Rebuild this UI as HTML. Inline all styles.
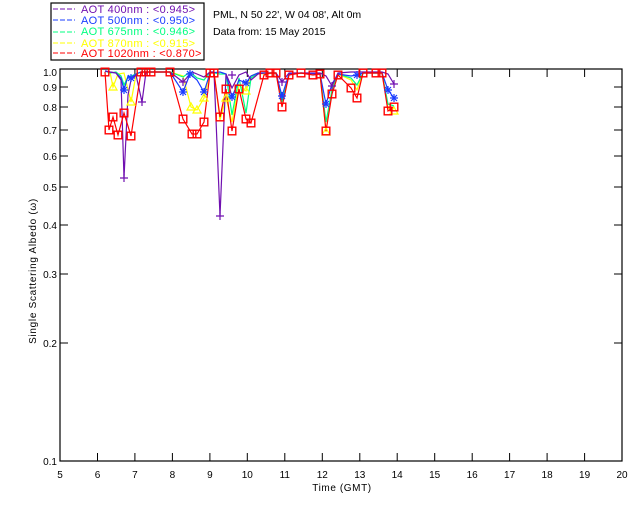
<!DOCTYPE html>
<html><head><meta charset="utf-8"><style>
html,body{margin:0;padding:0;background:#fff;}
svg{display:block;}
svg text{font-family:"Liberation Sans",Arial,sans-serif;}
</style></head><body>
<svg width="640" height="512" viewBox="0 0 640 512" xmlns="http://www.w3.org/2000/svg">
<defs>
<g id="sq"><rect x="-3.8" y="-3.8" width="7.6" height="7.6" fill="none" stroke="#ff0000" stroke-width="1.4"/></g>
<g id="pl"><path d="M-4 0H4M0 -4V4" stroke="#7010b0" stroke-width="1.2"/></g>
<g id="st"><path d="M-4 0H4M0 -4V4M-3 -3L3 3M-3 3L3 -3" stroke="#1a3cff" stroke-width="1.2"/></g>
<g id="tr"><path d="M-4 3L0 -4L4 3Z" fill="none" stroke="#ffff00" stroke-width="1.2"/></g>
</defs>
<rect x="51" y="3" width="153" height="57" fill="#fff" stroke="#000" stroke-width="1.2"/>
<g font-size="11" letter-spacing="0.3">
<line x1="53" y1="9" x2="75" y2="9" stroke="#7010b0" stroke-dasharray="5,2"/>
<text x="81" y="13" fill="#7010b0">AOT  400nm : &lt;0.945&gt;</text>
<line x1="53" y1="20" x2="75" y2="20" stroke="#1a3cff" stroke-dasharray="5,2"/>
<text x="81" y="24" fill="#1a3cff">AOT  500nm : &lt;0.950&gt;</text>
<line x1="53" y1="32" x2="75" y2="32" stroke="#00ff80" stroke-dasharray="5,2"/>
<text x="81" y="35" fill="#00ff80">AOT  675nm : &lt;0.946&gt;</text>
<line x1="53" y1="43" x2="75" y2="43" stroke="#ffff00" stroke-dasharray="5,2"/>
<text x="81" y="47" fill="#ffff00">AOT  870nm : &lt;0.915&gt;</text>
<line x1="53" y1="53" x2="75" y2="53" stroke="#ff0000" stroke-dasharray="5,2"/>
<text x="81" y="57" fill="#ff0000">AOT 1020nm : &lt;0.870&gt;</text>
</g>
<g font-size="10.5">
<text x="213" y="18" fill="#000">PML, N 50 22', W 04 08', Alt 0m</text>
<text x="213" y="35" fill="#000">Data from: 15 May 2015</text>
</g>
<rect x="60" y="69" width="562" height="392" fill="none" stroke="#000" stroke-width="1.2"/>
<g stroke="#000" stroke-width="1">
<path d="M97.5 461v-8M134.9 461v-8M172.4 461v-8M209.9 461v-8M247.3 461v-8M284.8 461v-8M322.3 461v-8M359.8 461v-8M397.2 461v-8M434.7 461v-8M472.2 461v-8M509.6 461v-8M547.1 461v-8M584.6 461v-8"/>
<path d="M97.5 69v8M134.9 69v8M172.4 69v8M209.9 69v8M247.3 69v8M284.8 69v8M322.3 69v8M359.8 69v8M397.2 69v8M434.7 69v8M472.2 69v8M509.6 69v8M547.1 69v8M584.6 69v8"/>
<path d="M60 343h8M60 274h8M60 225h8M60 187h8M60 156h8M60 130h8M60 107h8M60 87h8"/>
<path d="M622 343h-8M622 274h-8M622 225h-8M622 187h-8M622 156h-8M622 130h-8M622 107h-8M622 87h-8"/>
</g>
<g font-size="10" fill="#000" text-anchor="end">
<text x="57" y="465">0.1</text><text x="57" y="347">0.2</text><text x="57" y="278">0.3</text>
<text x="57" y="229">0.4</text><text x="57" y="191">0.5</text><text x="57" y="160">0.6</text>
<text x="57" y="134">0.7</text><text x="57" y="111">0.8</text><text x="57" y="91">0.9</text><text x="57" y="76">1.0</text>
</g>
<g font-size="10" fill="#000" text-anchor="middle">
<text x="60" y="478">5</text><text x="97.5" y="478">6</text><text x="134.9" y="478">7</text><text x="172.4" y="478">8</text>
<text x="209.9" y="478">9</text><text x="247.3" y="478">10</text><text x="284.8" y="478">11</text><text x="322.3" y="478">12</text>
<text x="359.8" y="478">13</text><text x="397.2" y="478">14</text><text x="434.7" y="478">15</text><text x="472.2" y="478">16</text>
<text x="509.6" y="478">17</text><text x="547.1" y="478">18</text><text x="584.6" y="478">19</text><text x="622" y="478">20</text>
<text x="342" y="491" letter-spacing="0.6">Time (GMT)</text>
<text transform="translate(36 271) rotate(-90)" letter-spacing="0.7">Single Scattering Albedo (ω)</text>
</g>
<g fill="none" stroke-width="1.2">
<polyline stroke="#ffff00" points="105,71 110,72 113,87 118,74 124,73 131,102 136,75 141,72 151,72 170,72 183,76 191,107 197,110 204,98 210,72 214,72 220,120 226,98 232,122 239,85 246,91 251,76 258,73 264,74 276,73 282,100 289,74 301,73 320,74 326,132 332,88 338,74 351,80 357,90 363,73 382,73 388,108 394,111"/>
<polyline stroke="#00ff80" points="105,71 110,73 116,72 121,76 124,85 128,77 131,76 136,74 141,72 151,72 170,72 183,77 190,72 197,78 204,80 210,72 220,74 226,74 232,115 239,78 246,113 251,78 258,73 276,73 282,102 289,74 301,73 320,74 326,122 332,90 338,74 351,78 357,85 363,73 382,73 388,104 394,106"/>
<polyline stroke="#1a3cff" points="105,71 110,72 116,73 121,78 124,90 128,76 131,78 136,74 141,72 151,72 170,72 183,92 190,74 197,80 204,92 210,73 220,72 226,74 232,97 239,80 246,83 251,76 258,73 276,73 282,96 289,74 301,73 320,74 326,104 332,84 338,74 351,76 357,75 363,73 382,73 388,90 394,98"/>
<polyline stroke="#7010b0" points="105,71 110,72 116,73 121,80 124,178 128,95 131,80 136,75 142,102 146,72 151,72 170,72 183,82 192,72 197,74 204,77 210,72 214,72 220,216 226,74 232,88 239,75 246,72 251,80 258,74 264,73 276,73 282,82 289,73 301,73 320,73 326,76 332,86 338,73 351,72 363,72 382,72 388,74 394,84"/>
<polyline stroke="#ff0000" points="105,72 109,130 113,117 118,135 124,113 131,136 141,72 146,72 151,72 170,72 183,119 192,134 197,134 204,122 210,73 214,73 220,117 226,89 232,131 239,89 246,119 251,123 264,75 270,73 276,73 282,107 289,75 301,73 313,75 320,74 326,131 332,94 338,75 351,88 357,98 363,73 376,73 382,73 388,111 394,107"/>
</g>
<g>
<use href="#pl" x="124" y="178"/><use href="#pl" x="142" y="102"/><use href="#pl" x="220" y="216"/><use href="#pl" x="183" y="82"/><use href="#pl" x="394" y="84"/><use href="#pl" x="232" y="75"/><use href="#pl" x="332" y="86"/><use href="#pl" x="282" y="82"/>
<use href="#st" x="124" y="90"/><use href="#st" x="183" y="92"/><use href="#st" x="204" y="92"/><use href="#st" x="232" y="97"/><use href="#st" x="246" y="83"/><use href="#st" x="282" y="96"/><use href="#st" x="326" y="104"/><use href="#st" x="388" y="90"/><use href="#st" x="394" y="98"/><use href="#st" x="190" y="74"/><use href="#st" x="131" y="78"/><use href="#st" x="357" y="75"/>
<use href="#tr" x="113" y="87"/><use href="#tr" x="131" y="102"/><use href="#tr" x="191" y="107"/><use href="#tr" x="197" y="110"/><use href="#tr" x="204" y="98"/><use href="#tr" x="226" y="98"/><use href="#tr" x="246" y="91"/><use href="#tr" x="394" y="111"/><use href="#tr" x="326" y="132"/>
<use href="#sq" x="105" y="72"/><use href="#sq" x="109" y="130"/><use href="#sq" x="113" y="117"/><use href="#sq" x="118" y="135"/><use href="#sq" x="124" y="113"/><use href="#sq" x="131" y="136"/><use href="#sq" x="141" y="72"/><use href="#sq" x="146" y="72"/><use href="#sq" x="151" y="72"/><use href="#sq" x="170" y="72"/><use href="#sq" x="183" y="119"/><use href="#sq" x="192" y="134"/><use href="#sq" x="197" y="134"/><use href="#sq" x="204" y="122"/><use href="#sq" x="210" y="73"/><use href="#sq" x="214" y="73"/><use href="#sq" x="220" y="117"/><use href="#sq" x="226" y="89"/><use href="#sq" x="232" y="131"/><use href="#sq" x="239" y="89"/><use href="#sq" x="246" y="119"/><use href="#sq" x="251" y="123"/><use href="#sq" x="264" y="75"/><use href="#sq" x="270" y="73"/><use href="#sq" x="276" y="73"/><use href="#sq" x="282" y="107"/><use href="#sq" x="289" y="75"/><use href="#sq" x="301" y="73"/><use href="#sq" x="313" y="75"/><use href="#sq" x="320" y="74"/><use href="#sq" x="326" y="131"/><use href="#sq" x="332" y="94"/><use href="#sq" x="338" y="75"/><use href="#sq" x="351" y="88"/><use href="#sq" x="357" y="98"/><use href="#sq" x="363" y="73"/><use href="#sq" x="376" y="73"/><use href="#sq" x="382" y="73"/><use href="#sq" x="388" y="111"/><use href="#sq" x="394" y="107"/>
</g>
</svg>
</body></html>
